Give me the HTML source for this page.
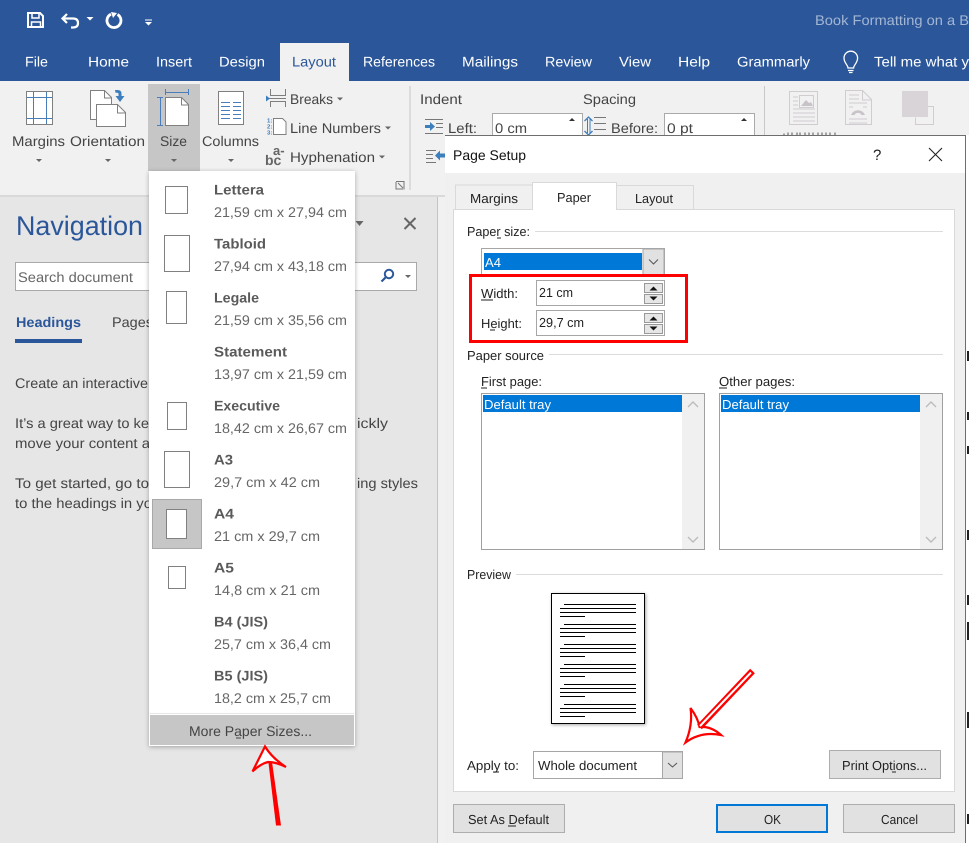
<!DOCTYPE html>
<html lang="en"><head><meta charset="utf-8"><title>Page Setup</title>
<style>
html,body{margin:0;padding:0;width:969px;height:843px;overflow:hidden;background:#fff}
svg{display:block}
text{font-family:"Liberation Sans",sans-serif;font-size:14px;fill:#444;white-space:pre}
.tab{fill:#fff}
.d{font-size:13px;fill:#222}
.n{font-weight:bold;fill:#5a5a5a}
.s{fill:#666}
.p{fill:#555}
.r{fill:#444}
.ic{fill:none;stroke:#7f7f7f;stroke-width:1}
.bl{fill:none;stroke:#4a7ebb;stroke-width:1}
.gr{fill:none;stroke:#d0ccd0;stroke-width:1}
.ul{stroke:#222;stroke-width:1}
.pg{fill:#fff;stroke:#808080;stroke-width:1}
.num{font-size:6px;font-weight:bold;fill:#3d7ebd}
</style></head><body>
<svg width="969" height="843" viewBox="0 0 969 843" xmlns="http://www.w3.org/2000/svg" text-rendering="geometricPrecision">
<defs>
<filter id="sh" x="-10%" y="-10%" width="120%" height="120%"><feDropShadow dx="0" dy="1" stdDeviation="2.5" flood-color="#000" flood-opacity=".3"/></filter>
<filter id="sh2" x="-10%" y="-10%" width="125%" height="120%"><feDropShadow dx="1" dy="1" stdDeviation="1.5" flood-color="#000" flood-opacity=".35"/></filter>
</defs>

<!-- title bar -->
<rect width="969" height="81" fill="#2b579a"/>
<rect x="280" y="43" width="69" height="38" fill="#f1f1f1"/>
<!-- QAT -->
<g fill="none" stroke="#fff" stroke-width="2">
<path d="M28 13h12l3 3v11h-15z"/><path d="M32 13v5h7v-5" stroke-width="1.5"/><path d="M31.500 27v-5h9v5" stroke-width="1.500"/>
<path d="M67 14l-4.500 4.500 4.500 4.500M63 18.500h10q5 0 5 4.500t-5 4.500h-2" stroke-width="2.200"/>
<path d="M111 14.200a7 7 0 1 0 6.500.3" stroke-width="2.800"/>
</g>
<path d="M111 12l6 1-4 5z" fill="#fff"/>
<path d="M86.500 17h7l-3.500 3.500zM145 19.500h7v1h-7zM145 22h7l-3.500 3.500z" fill="#fff"/>
<text x="815" y="25" textLength="154" lengthAdjust="spacingAndGlyphs" style="fill:#a3b6d3">Book Formatting on a B</text>

<!-- tabs -->
<text class="tab" x="25" y="66.500" textLength="23" lengthAdjust="spacingAndGlyphs">File</text>
<text class="tab" x="88" y="66.500" textLength="41" lengthAdjust="spacingAndGlyphs">Home</text>
<text class="tab" x="156" y="66.500" textLength="36" lengthAdjust="spacingAndGlyphs">Insert</text>
<text class="tab" x="219" y="66.500" textLength="46" lengthAdjust="spacingAndGlyphs">Design</text>
<text x="292" y="66.500" textLength="44" lengthAdjust="spacingAndGlyphs" style="fill:#2b579a">Layout</text>
<text class="tab" x="363" y="66.500" textLength="72" lengthAdjust="spacingAndGlyphs">References</text>
<text class="tab" x="462" y="66.500" textLength="56" lengthAdjust="spacingAndGlyphs">Mailings</text>
<text class="tab" x="545" y="66.500" textLength="47" lengthAdjust="spacingAndGlyphs">Review</text>
<text class="tab" x="619" y="66.500" textLength="32" lengthAdjust="spacingAndGlyphs">View</text>
<text class="tab" x="678" y="66.500" textLength="32" lengthAdjust="spacingAndGlyphs">Help</text>
<text class="tab" x="737" y="66.500" textLength="73" lengthAdjust="spacingAndGlyphs">Grammarly</text>
<g fill="none" stroke="#fff" stroke-width="1.300"><path d="M848 68c0-3-4-5-4-10a6.800 6.800 0 0 1 13.600 0c0 5-4 7-4 10z"/><path d="M848 70.500h5.500M849 72.500h3.500"/></g>
<text class="tab" x="874" y="66.500" textLength="95" lengthAdjust="spacingAndGlyphs">Tell me what y</text>

<!-- ribbon -->
<rect y="81" width="969" height="114" fill="#f1f1f1"/>
<rect y="195" width="969" height="2" fill="#d9d9d9"/>
<rect y="197" width="438" height="646" fill="#e6e6e6"/>
<rect x="437" y="197" width="1" height="646" fill="#c4c4c4"/>
<rect x="438" y="197" width="7" height="646" fill="#f1f1f1"/>
<rect x="148" y="84" width="52" height="87" fill="#c6c6c6"/>

<!-- margins icon -->
<rect class="pg" x="26.500" y="91.500" width="26" height="33"/>
<path class="bl" d="M33.500 92v32M46.500 92v32M27 97.500h25M27 118.500h25"/>
<!-- orientation icon -->
<path class="pg" d="M90.500 90.500h14l7 7v22h-21z"/><path class="ic" d="M104.500 91v7h7"/>
<path class="pg" d="M96.500 104.500h21l8 8v14h-29z"/><path class="ic" d="M117.500 105v8h8"/>
<path d="M115 90h2.500q4 0 4 3.500v2.500h3l-4.500 6-4.500-6h3v-2q0-1.200-1.500-1.200h-1.500z" fill="#3d7ebd"/>
<!-- size icon -->
<path class="bl" d="M165.500 89v6M188.500 89v6M165.500 92.500h23M157 97.500h6M157 125.500h6M160.500 97v28"/>
<path class="pg" d="M165.500 97.500h16l7 7v21h-23z"/><path class="ic" d="M181.500 98v7h7"/>
<!-- columns icon -->
<rect class="pg" x="218.500" y="91.500" width="25" height="33"/>
<path class="bl" stroke-width="1" d="M221 102.500h9M233 102.500h8M221 106.500h9M233 106.500h8M221 110.500h9M233 110.500h8M221 114.500h9M233 114.500h8M221 118.500h9M233 118.500h8"/>
<!-- breaks -->
<path class="ic" d="M270.500 89v6.500h15V89M270.500 107v-5.500h15v5.500M267 98.500h19"/><path d="M266 95.500l4 3-4 3z" fill="#3d7ebd"/>
<!-- line numbers -->
<path class="pg" d="M273.500 118.500h9l3.500 3.500v12.500h-12.500z"/>
<text class="num" x="267" y="122.500">1:</text>
<text class="num" x="267" y="128.500">2:</text>
<text class="num" x="267" y="134.500">3:</text>
<!-- hyphenation -->
<text x="273" y="155" style="font-size:13px;fill:#666;font-weight:bold">a-</text>
<text x="265" y="165" style="font-size:14px;fill:#666;font-weight:bold">bc</text>

<text x="12" y="146" textLength="53" lengthAdjust="spacingAndGlyphs">Margins</text>
<text x="70" y="146" textLength="75" lengthAdjust="spacingAndGlyphs">Orientation</text>
<text x="160" y="146" textLength="27" lengthAdjust="spacingAndGlyphs">Size</text>
<text x="202" y="146" textLength="57" lengthAdjust="spacingAndGlyphs">Columns</text>
<path d="M36 159h6l-3 3zM105 159h6l-3 3zM171 159h6l-3 3zM228 159h6l-3 3zM337 97.500h6l-3 3zM385 126.500h6l-3 3zM379 155.500h6l-3 3z" fill="#666"/>
<text x="290" y="104" textLength="43" lengthAdjust="spacingAndGlyphs">Breaks</text>
<text x="290" y="133" textLength="91" lengthAdjust="spacingAndGlyphs">Line Numbers</text>
<text x="290" y="162" textLength="85" lengthAdjust="spacingAndGlyphs">Hyphenation</text>
<path d="M396 181.500h8v8M396 182v7h7M398 183l5 5" fill="none" stroke="#777"/>
<rect x="409.500" y="86" width="1" height="104" fill="#c8c8c8"/>
<rect x="764" y="86" width="1" height="104" fill="#c8c8c8"/>

<text x="420" y="104" textLength="42" lengthAdjust="spacingAndGlyphs">Indent</text>
<text x="583" y="104" textLength="53" lengthAdjust="spacingAndGlyphs">Spacing</text>
<path d="M425 119.500h18M436 123.500h7M436 127.500h7M425 133.500h18" fill="none" stroke="#777"/>
<path d="M425 125h5v-3l5 4.500-5 4.500v-3h-5z" fill="#3d7ebd"/>
<text x="448" y="133" textLength="29" lengthAdjust="spacingAndGlyphs">Left:</text>
<rect x="492.500" y="113.500" width="90" height="24" fill="#fff" stroke="#aaa"/>
<text x="495" y="133" textLength="32" lengthAdjust="spacingAndGlyphs">0 cm</text>
<path d="M569 121h6l-3-3z" fill="#333"/>
<path d="M587.500 119v14M590 119v14" stroke="#3d7ebd"/>
<path d="M584.500 121l4-4 4 4M584.500 131l4 4 4-4" fill="none" stroke="#3d7ebd" stroke-width="1.300"/>
<path d="M594 117.500h12M594 123.500h12M594 129.500h12" stroke="#777" fill="none"/>
<text x="611" y="133" textLength="47" lengthAdjust="spacingAndGlyphs">Before:</text>
<rect x="664.500" y="113.500" width="90" height="24" fill="#fff" stroke="#aaa"/>
<text x="667" y="133" textLength="26" lengthAdjust="spacingAndGlyphs">0 pt</text>
<path d="M741 121h6l-3-3z" fill="#333"/>
<path d="M426 150.500h10M426 154.500h7M426 158.500h7M426 162.500h10" fill="none" stroke="#777"/>
<path d="M445 153.500h-5v-3l-5 5 5 5v-3h5z" fill="#3d7ebd"/>
<!-- disabled picture icons -->
<rect class="gr" x="789.500" y="91.500" width="28" height="33"/>
<path class="gr" d="M793 97h5M793 101h5M793 105h5M793 109h22M793 113h22M793 117h22M793 121h22"/>
<rect class="gr" x="799.500" y="95.500" width="14" height="12"/>
<path d="M801 106l5-6 3 3 2-1 2 4z" fill="#c8c3c8"/>
<path class="gr" d="M845.500 90.500h17l9 9v25h-26zM862.500 91v9h9M849 95h10M849 99h10M849 103h18M849 107h4M863 107h4M849 119h18M849 123h18"/>
<path d="M851 115a7.500 7.500 0 0 1 14 0h-3.500a4 4 0 0 0-7 0z" fill="#c8c3c8"/>
<rect x="902" y="91" width="26" height="26" fill="#d8d4d8"/>
<path class="gr" d="M928 106.500h5.500v18h-18v-7"/>
<path d="M784 135.500v-2M788 135.500v-3M792 135.500v-3M797 135.500v-3M800 135.500v-3M805 135.500v-3M809 135.500v-3M813 135.500v-3M818 135.500v-3M822 135.500v-3M826 135.500v-3M830 135.500v-3M835 135.500v-3" stroke="#555" fill="none"/>

<!-- navigation pane -->
<text x="16" y="235" textLength="127" lengthAdjust="spacingAndGlyphs" style="font-size:27px;fill:#2b579a">Navigation</text>
<path d="M355.500 221h8l-4 5z" fill="#666"/>
<path d="M404.500 218l11 11M415.500 218l-11 11" stroke="#666" stroke-width="2"/>
<rect x="15.500" y="262.500" width="401" height="28" fill="#fff" stroke="#a9a9a9"/>
<text x="18" y="282" textLength="115" lengthAdjust="spacingAndGlyphs" style="fill:#666">Search document</text>
<circle cx="389" cy="274" r="4.200" fill="none" stroke="#2b579a" stroke-width="2"/>
<path d="M385.500 277.500l-4 4" stroke="#2b579a" stroke-width="2.200"/>
<path d="M405 275h6l-3 3z" fill="#666"/>
<text x="16" y="327" textLength="65" lengthAdjust="spacingAndGlyphs" style="font-weight:bold;fill:#2b579a">Headings</text>
<rect x="15" y="339" width="67" height="4" fill="#2b579a"/>
<text x="112" y="327" textLength="41" lengthAdjust="spacingAndGlyphs">Pages</text>
<text class="r" x="15" y="388" textLength="133" lengthAdjust="spacingAndGlyphs">Create an interactive</text>
<text class="r" x="15" y="428" textLength="134" lengthAdjust="spacingAndGlyphs">It’s a great way to ke</text>
<text class="r" x="357" y="428" textLength="31" lengthAdjust="spacingAndGlyphs">ickly</text>
<text class="r" x="15" y="448" textLength="135" lengthAdjust="spacingAndGlyphs">move your content a</text>
<text class="r" x="15" y="488" textLength="134" lengthAdjust="spacingAndGlyphs">To get started, go to</text>
<text class="r" x="357" y="488" textLength="61" lengthAdjust="spacingAndGlyphs">ing styles</text>
<text class="r" x="15" y="508" textLength="137" lengthAdjust="spacingAndGlyphs">to the headings in yo</text>

<!-- size menu -->
<rect x="149" y="171" width="206" height="575" fill="#fff" filter="url(#sh)"/>
<rect x="152.500" y="499.500" width="49" height="49" fill="#c6c6c6" stroke="#a8a8a8"/>
<rect class="pg" x="165.500" y="186.500" width="22" height="27"/>
<rect class="pg" x="164.500" y="235.500" width="25" height="36"/>
<rect class="pg" x="166.500" y="291.500" width="20" height="32"/>
<rect class="pg" x="167.500" y="402.500" width="19" height="27"/>
<rect class="pg" x="164.500" y="451.500" width="25" height="36"/>
<rect class="pg" x="166.500" y="509.500" width="20" height="29"/>
<rect class="pg" x="168.500" y="566.500" width="17" height="22"/>

<text class="n" x="214" y="194.500" textLength="50" lengthAdjust="spacingAndGlyphs">Lettera</text>
<text class="s" x="214" y="217" textLength="133" lengthAdjust="spacingAndGlyphs">21,59 cm x 27,94 cm</text>
<text class="n" x="214" y="248.500" textLength="52" lengthAdjust="spacingAndGlyphs">Tabloid</text>
<text class="s" x="214" y="271" textLength="133" lengthAdjust="spacingAndGlyphs">27,94 cm x 43,18 cm</text>
<text class="n" x="214" y="302.500" textLength="45" lengthAdjust="spacingAndGlyphs">Legale</text>
<text class="s" x="214" y="325" textLength="133" lengthAdjust="spacingAndGlyphs">21,59 cm x 35,56 cm</text>
<text class="n" x="214" y="356.500" textLength="73" lengthAdjust="spacingAndGlyphs">Statement</text>
<text class="s" x="214" y="379" textLength="133" lengthAdjust="spacingAndGlyphs">13,97 cm x 21,59 cm</text>
<text class="n" x="214" y="410.500" textLength="66" lengthAdjust="spacingAndGlyphs">Executive</text>
<text class="s" x="214" y="433" textLength="133" lengthAdjust="spacingAndGlyphs">18,42 cm x 26,67 cm</text>
<text class="n" x="214" y="464.500" textLength="19" lengthAdjust="spacingAndGlyphs">A3</text>
<text class="s" x="214" y="487" textLength="106" lengthAdjust="spacingAndGlyphs">29,7 cm x 42 cm</text>
<text class="n" x="214" y="518.500" textLength="20" lengthAdjust="spacingAndGlyphs">A4</text>
<text class="s" x="214" y="541" textLength="106" lengthAdjust="spacingAndGlyphs">21 cm x 29,7 cm</text>
<text class="n" x="214" y="572.500" textLength="20" lengthAdjust="spacingAndGlyphs">A5</text>
<text class="s" x="214" y="595" textLength="106" lengthAdjust="spacingAndGlyphs">14,8 cm x 21 cm</text>
<text class="n" x="214" y="626.500" textLength="54" lengthAdjust="spacingAndGlyphs">B4 (JIS)</text>
<text class="s" x="214" y="649" textLength="117" lengthAdjust="spacingAndGlyphs">25,7 cm x 36,4 cm</text>
<text class="n" x="214" y="680.500" textLength="54" lengthAdjust="spacingAndGlyphs">B5 (JIS)</text>
<text class="s" x="214" y="703" textLength="117" lengthAdjust="spacingAndGlyphs">18,2 cm x 25,7 cm</text>
<rect x="150" y="713" width="204" height="1" fill="#e6e6e6"/>
<rect x="150" y="715" width="204" height="30" fill="#c6c6c6"/>
<text x="189" y="736" textLength="123" lengthAdjust="spacingAndGlyphs">More Paper Sizes...</text>
<path d="M236 738h5" stroke="#444"/>

<!-- red up arrow -->
<path d="M265 746.500L252.500 771.500Q260 764 268 762Q276 762 286 767Q272 758 265 746.500z" fill="#fff" stroke="#f00" stroke-width="2.200"/>
<path d="M268.500 763L276 825.500H281L272 762z" fill="#f00"/>

<!-- right background document peek -->
<rect x="966" y="135" width="3" height="708" fill="#fff"/>
<path d="M967 351h2v10h-2zM967 412h2v8h-2zM967 446h2v8h-2zM967 530h2v10h-2zM967 595h2v10h-2zM967 622h2v18h-2zM967 712h2v16h-2zM967 814h2v10h-2z" fill="#222"/>

<!-- dialog -->
<rect x="445" y="135" width="521" height="708" fill="#f0f0f0"/>
<rect x="445" y="136" width="520" height="37" fill="#fff"/>
<path d="M445 135.500h521M965.500 135v708" stroke="#6e6e6e" fill="none"/>
<text x="453" y="160" textLength="73" lengthAdjust="spacingAndGlyphs" style="fill:#111">Page Setup</text>
<text x="873" y="160" style="fill:#222;font-size:15px">?</text>
<path d="M929 148l13 13M942 148l-13 13" stroke="#222" stroke-width="1.100"/>

<path d="M455.500 210v-25h78M616 185.500h77.500v25" fill="#f0f0f0" stroke="#d9d9d9"/>
<rect x="453.500" y="209.500" width="501" height="582" fill="#fff" stroke="#d9d9d9"/>
<path d="M532.500 210v-27.500h84v27.500" fill="#fff" stroke="#d9d9d9"/>
<rect x="533" y="208" width="83" height="3" fill="#fff"/>
<text class="d" x="470" y="203" textLength="48" lengthAdjust="spacingAndGlyphs">Margins</text>
<text class="d" x="557" y="202" textLength="34" lengthAdjust="spacingAndGlyphs">Paper</text>
<text class="d" x="635" y="203" textLength="38" lengthAdjust="spacingAndGlyphs">Layout</text>

<text class="d" x="467" y="236" textLength="63" lengthAdjust="spacingAndGlyphs">Paper size:</text>
<path class="ul" d="M497 238h4"/>
<path d="M535 231.500h408" stroke="#dcdcdc"/>
<rect x="481.500" y="248.500" width="183" height="27" fill="#fff" stroke="#a6a6a6"/>
<rect x="484" y="253" width="158" height="17" fill="#0078d7"/>
<rect x="643" y="249" width="21" height="26" fill="#e1e1e1" stroke="#a6a6a6"/>
<path d="M649 259.500l4.500 4.500 4.500-4.500" fill="none" stroke="#555"/>
<text x="485" y="267" textLength="16" lengthAdjust="spacingAndGlyphs" style="font-size:13px;fill:#fff">A4</text>

<text class="d" x="481" y="298" textLength="37" lengthAdjust="spacingAndGlyphs">Width:</text>
<path class="ul" d="M481 300h12"/>
<rect x="536.500" y="280.500" width="128" height="25" fill="#fff" stroke="#a6a6a6"/>
<text class="d" x="539" y="297" textLength="34" lengthAdjust="spacingAndGlyphs">21 cm</text>
<rect x="644.500" y="283.500" width="18" height="9" fill="#e6e6e6" stroke="#999"/>
<rect x="644.500" y="294.500" width="18" height="9" fill="#e6e6e6" stroke="#999"/>
<path d="M649.500 290.500h8l-4-4zM649.500 296.500h8l-4 4z" fill="#111"/>
<text class="d" x="481" y="328" textLength="41" lengthAdjust="spacingAndGlyphs">Height:</text>
<path class="ul" d="M490 330h5"/>
<rect x="536.500" y="310.500" width="128" height="25" fill="#fff" stroke="#a6a6a6"/>
<text class="d" x="539" y="327" textLength="45" lengthAdjust="spacingAndGlyphs">29,7 cm</text>
<rect x="644.500" y="313.500" width="18" height="9" fill="#e6e6e6" stroke="#999"/>
<rect x="644.500" y="324.500" width="18" height="9" fill="#e6e6e6" stroke="#999"/>
<path d="M649.500 320.500h8l-4-4zM649.500 326.500h8l-4 4z" fill="#111"/>
<rect x="470.500" y="275.500" width="216" height="66" fill="none" stroke="#f00" stroke-width="3"/>

<text class="d" x="467" y="360" textLength="77" lengthAdjust="spacingAndGlyphs">Paper source</text>
<path d="M549 354.500h394" stroke="#dcdcdc"/>
<text class="d" x="481" y="386" textLength="61" lengthAdjust="spacingAndGlyphs">First page:</text>
<path class="ul" d="M481 388h6"/>
<text class="d" x="719" y="386" textLength="76" lengthAdjust="spacingAndGlyphs">Other pages:</text>
<path class="ul" d="M719 388h8"/>
<rect x="481.500" y="393.500" width="223" height="156" fill="#fff" stroke="#a0a0a0"/>
<rect x="483" y="395" width="199" height="17" fill="#0078d7"/>
<rect x="682" y="394" width="22" height="155" fill="#f0f0f0"/>
<path d="M688 407l5-5 5 5M688 537l5 5 5-5" fill="none" stroke="#bcbcbc" stroke-width="1.400"/>
<text x="484" y="409" textLength="67" lengthAdjust="spacingAndGlyphs" style="font-size:13px;fill:#fff">Default tray</text>
<rect x="719.500" y="393.500" width="223" height="156" fill="#fff" stroke="#a0a0a0"/>
<rect x="721" y="395" width="199" height="17" fill="#0078d7"/>
<rect x="920" y="394" width="22" height="155" fill="#f0f0f0"/>
<path d="M926 407l5-5 5 5M926 537l5 5 5-5" fill="none" stroke="#bcbcbc" stroke-width="1.400"/>
<text x="722" y="409" textLength="67" lengthAdjust="spacingAndGlyphs" style="font-size:13px;fill:#fff">Default tray</text>

<text class="d" x="467" y="579" textLength="44" lengthAdjust="spacingAndGlyphs">Preview</text>
<path d="M516 574.500h427" stroke="#dcdcdc"/>
<rect x="551.500" y="593.500" width="93" height="130" fill="#fff" stroke="#000" filter="url(#sh2)"/>
<path stroke="#000" fill="none" d="M564 604.500h72M560 608.500h76M560 612.500h76M560 616.500h25
M564 624.500h72M560 628.500h76M560 632.500h76M560 636.500h25
M564 644.500h72M560 648.500h76M560 652.500h76M560 656.500h25
M564 664.500h72M560 668.500h76M560 672.500h76M560 676.500h25
M564 684.500h72M560 688.500h76M560 692.500h76M560 696.500h25
M564 704.500h72M560 708.500h76M560 712.500h76M560 716.500h25"/>

<text class="d" x="467" y="770" textLength="52" lengthAdjust="spacingAndGlyphs">Apply to:</text>
<path class="ul" d="M493 772h6"/>
<rect x="533.500" y="751.500" width="149" height="27" fill="#fff" stroke="#a6a6a6"/>
<rect x="662.500" y="752" width="20" height="26.500" fill="#e1e1e1" stroke="#a6a6a6"/>
<path d="M668 763l4.500 4 4.500-4" fill="none" stroke="#555"/>
<text class="d" x="538" y="770" textLength="99" lengthAdjust="spacingAndGlyphs">Whole document</text>
<rect x="829.500" y="750.500" width="111" height="28" fill="#e1e1e1" stroke="#adadad"/>
<text class="d" x="842" y="770" textLength="85" lengthAdjust="spacingAndGlyphs">Print Options...</text>
<path class="ul" d="M892 772h4"/>

<rect x="453.500" y="804.500" width="111" height="28" fill="#e1e1e1" stroke="#adadad"/>
<text class="d" x="468" y="824" textLength="81" lengthAdjust="spacingAndGlyphs">Set As Default</text>
<path class="ul" d="M508 826h8"/>
<rect x="717" y="805" width="110" height="27" fill="#e1e1e1" stroke="#0078d7" stroke-width="2"/>
<text class="d" x="764" y="824" textLength="17" lengthAdjust="spacingAndGlyphs">OK</text>
<rect x="843.500" y="804.500" width="111" height="28" fill="#e1e1e1" stroke="#adadad"/>
<text class="d" x="881" y="824" textLength="37" lengthAdjust="spacingAndGlyphs">Cancel</text>

<!-- red diagonal arrow -->
<path d="M690.500 708Q698 718 699.500 727Q711 726 721 735Q701 731 685.500 742.500Q693 725 690.500 708z" fill="#fff" stroke="#f00" stroke-width="2.200"/>
<path d="M752.500 671L699.500 727" stroke="#f00" stroke-width="6.500" fill="none"/>
<path d="M751 672.500L700 726" stroke="#fff" stroke-width="2" fill="none"/>
</svg>
</body></html>
